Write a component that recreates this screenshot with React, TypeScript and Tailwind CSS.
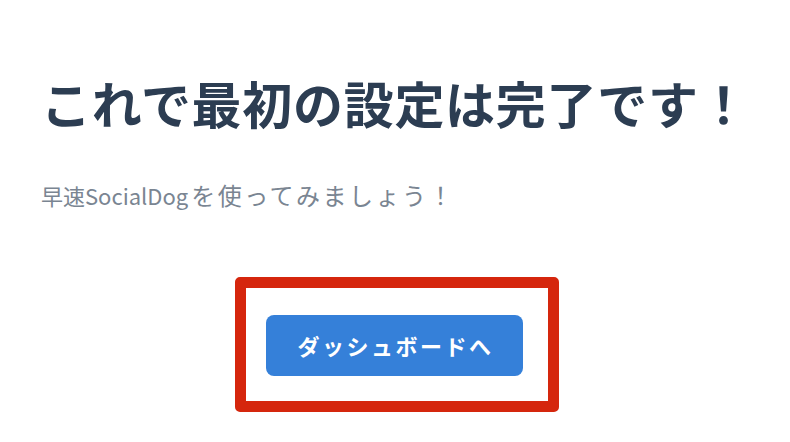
export default function App() {
  return (
    <div
      className="min-h-[442px] w-full bg-white"
      style={{ fontFamily: '"Noto Sans CJK JP", "Noto Sans", sans-serif' }}
    >
      <div className="flex flex-col px-[41px] pt-[77px]">
        <h1 className="text-[50px] leading-none font-bold text-[#2c3d52] tracking-[0.7px] whitespace-nowrap">
          これで最初の設定は完了です！
        </h1>
        <p className="mt-[56px] text-[22px] leading-none text-[#7a8592] whitespace-nowrap">
          早速SocialDog<span className="ml-[3px] text-[24px] tracking-[2.5px]">を使ってみましょう！</span>
        </p>
      </div>

      {/* ボタン（赤枠で囲み） */}
      <div className="mt-[70px] flex justify-center">
        <div className="ml-[4px] flex h-[135px] w-[324px] items-center justify-center rounded-[5px] border-[11px] border-[#d5260d] pr-[5px] pt-[2px]">
          <button className="h-[61px] w-[257px] rounded-[8px] bg-[#3580d9] pl-[2px] text-[22px] font-bold text-white tracking-[2.5px]">
            ダッシュボードへ
          </button>
        </div>
      </div>
    </div>
  );
}
